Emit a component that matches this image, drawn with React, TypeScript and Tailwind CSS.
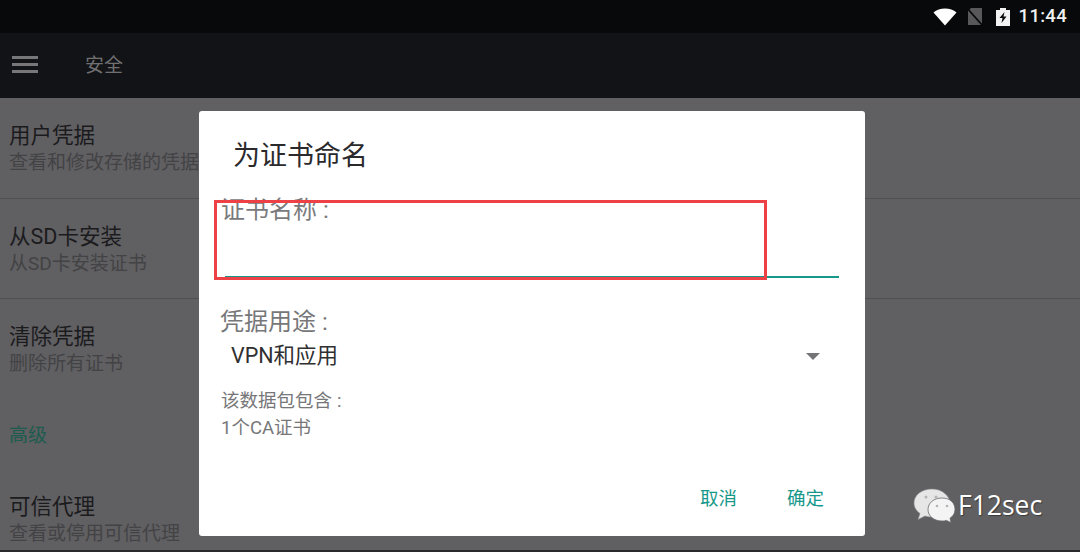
const cjk = "font-['Roboto','Noto_Sans_CJK_SC',sans-serif]";

function Row({ title, sub, className }: { title: string; sub: string; className: string }) {
  return (
    <div className={`flex flex-col pl-[9px] ${className}`}>
      <div className="text-[21.5px] leading-[30px] text-[#1b1b1d]">{title}</div>
      <div className="mt-[-3px] text-[19px] leading-[30px] text-[#434345]">{sub}</div>
    </div>
  );
}

function WeChatLogo() {
  return (
    <svg width="46" height="36" viewBox="0 0 46 36">
      <path d="M21 2C10 2 3 8.500 3 16c0 4.500 2.500 8 6 10.500L7 32.500l7-3.500c2 .6 4.500 1 7 1 11 0 18-6.500 18-13.500S32 2 21 2z" fill="#e6e6e6" stroke="#8a8a8c" strokeWidth="0.600" />
      <path d="M31 11c-8.500 0-14 5.200-14 11.500S22.500 34 31 34c1.600 0 3-.2 4.400-.6L40 35.500l-1-4.300c3-2 5-5.100 5-8.700C44 16.200 39.500 11 31 11z" fill="#f4f4f4" stroke="#6a6a6d" strokeWidth="0.800" />
      <circle cx="15" cy="10" r="1.500" fill="#b5b5b7" />
      <circle cx="25" cy="10" r="1.500" fill="#b5b5b7" />
      <circle cx="26" cy="19" r="1.300" fill="#b5b5b7" />
      <circle cx="36" cy="19" r="1.300" fill="#b5b5b7" />
    </svg>
  );
}

function StatusBar() {
  return (
    <div className="flex h-[33px] items-center justify-end bg-[#08090a] pr-[13px]">
      <svg width="24" height="18" viewBox="0 0 24 18" className="mr-[9px]">
        <path d="M0.500 4.500C3.500 1.800 7.500 0.500 12 0.500s8.500 1.300 11.500 4L12 17.500z" fill="#ffffff" />
      </svg>
      <svg width="17" height="19" viewBox="0 0 17 19" className="mr-[13px]">
        <path d="M5 1h11v17H2V4z" fill="#58585a" />
        <path d="M0.500 0.500L16.500 18.500" stroke="#08090a" strokeWidth="1.600" />
      </svg>
      <svg width="14" height="18" viewBox="0 0 14 18" className="mr-[9px]">
        <path d="M4 0h6v2h4v16H0V2h4z" fill="#f2f2f2" />
        <path d="M8.500 4L3.500 10h3l-1 5 5-6.500h-3z" fill="#08090a" />
      </svg>
      <span className="font-['Roboto',sans-serif] text-[18.500px] font-medium leading-none tracking-[0.3px] text-[#f0f0f0]">11:44</span>
    </div>
  );
}

function Dialog() {
  return (
    <div className="absolute left-[199px] top-[111px] flex h-[425px] w-[666px] flex-col rounded-[3px] bg-white">
      <div className="pl-[34px] pt-[26px] text-[27px] leading-[38px] text-[#2a2a2c]">为证书命名</div>
      <div className="pl-[22px] pt-[20px] text-[24px] leading-[30px] text-[#7a7a7c]">证书名称<span className="ml-[6px]">:</span></div>
      <div className="mx-[26px] mt-[51px] h-[2px] bg-[#17988a]" />
      <div className="pl-[21px] pt-[29px] text-[24px] leading-[30px] text-[#77777a]">凭据用途<span className="ml-[6px]">:</span></div>
      <div className="flex items-center justify-between pl-[32px] pr-[45px] pt-[4px]">
        <span className="text-[21.5px] leading-[30px] text-[#303032]">VPN和应用</span>
        <span className="h-0 w-0 border-x-[7px] border-t-[7px] border-x-transparent border-t-[#757577]" />
      </div>
      <div className="pl-[22px] pt-[17px] text-[18.500px] leading-[27px] text-[#777779]">
        <div>该数据包包含<span className="ml-[5px]">:</span></div>
        <div>1个CA证书</div>
      </div>
      <div className="mt-auto flex justify-end gap-[50px] pb-[24px] pr-[41px] text-[18.500px] leading-[26px] text-[#17988a]">
        <span>取消</span>
        <span>确定</span>
      </div>
    </div>
  );
}

export default function App() {
  return (
    <div className={`relative flex h-[552px] w-[1080px] flex-col overflow-hidden bg-[#605f62] ${cjk}`}>
      <StatusBar />
      <div className="flex h-[65px] items-center bg-[#121316]">
        <div className="ml-[12px] mt-[-3px] flex w-[26px] flex-col gap-[4px]">
          <div className="h-[3px] bg-[#77777a]" />
          <div className="h-[3px] bg-[#77777a]" />
          <div className="h-[3px] bg-[#77777a]" />
        </div>
        <span className="ml-[47px] pt-[1px] text-[19px] leading-[28px] text-[#707072]">安全</span>
      </div>
      <div className="flex flex-1 flex-col">
        <Row title="用户凭据" sub="查看和修改存储的凭据" className="h-[101px] border-b border-[#4f4f51] pt-[23px]" />
        <Row title="从SD卡安装" sub="从SD卡安装证书" className="h-[100px] border-b border-[#4f4f51] pt-[23px]" />
        <Row title="清除凭据" sub="删除所有证书" className="h-[100px] pt-[23px]" />
        <div className="flex h-[74px] items-center pl-[9px] text-[19px] leading-[28px] text-[#1c5c4e]">高级</div>
        <Row title="可信代理" sub="查看或停用可信代理" className="pt-[19px]" />
      </div>
      <div className="h-[2px] bg-[#2a2a2c]" />

      <Dialog />
      <div className="absolute left-[214px] top-[200px] h-[80px] w-[553px] border-[3px] border-[#ee4146]" />

      <div className="absolute left-[911px] top-[487px] flex items-center gap-[1px]">
        <WeChatLogo />
        <span className="font-['Open_Sans',sans-serif] text-[26.500px] leading-[34px] text-white [text-shadow:1px_1px_1px_#3a3a3a]">F12sec</span>
      </div>
    </div>
  );
}
